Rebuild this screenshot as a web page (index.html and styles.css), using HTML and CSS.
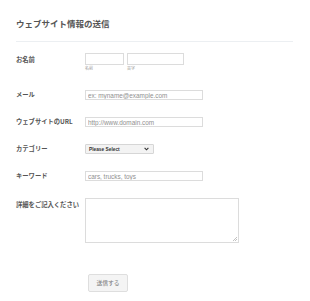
FILE: index.html
```html
<!DOCTYPE html>
<html lang="ja">
<head>
    <meta charset="UTF-8">
    <meta name="viewport" content="width=device-width, initial-scale=1.0">
    <title>ウェブサイト情報の送信</title>
    <link rel="stylesheet" href="styles.css">
</head>
<body>
    <div class="form-wrap">
        <div class="form-header">
            <h1>ウェブサイト情報の送信</h1>
        </div>

        <form class="form">
            <div class="row row-name">
                <label class="label">お名前</label>
                <div class="field name-field">
                    <div class="name-part">
                        <input type="text" class="input first">
                        <span class="sub">名前</span>
                    </div>
                    <div class="name-part">
                        <input type="text" class="input last">
                        <span class="sub">苗字</span>
                    </div>
                </div>
            </div>

            <div class="row">
                <label class="label">メール</label>
                <div class="field">
                    <input type="text" class="input wide" placeholder="ex: myname@example.com">
                </div>
            </div>

            <div class="row">
                <label class="label">ウェブサイトのURL</label>
                <div class="field">
                    <input type="text" class="input wide" placeholder="http://www.domain.com">
                </div>
            </div>

            <div class="row">
                <label class="label">カテゴリー</label>
                <div class="field">
                    <div class="select">
                        <span>Please Select</span>
                        <svg width="5" height="4" viewBox="0 0 5 4"><path d="M0.6 0.8 L2.5 2.8 L4.4 0.8" fill="none" stroke="#333" stroke-width="1.1"/></svg>
                    </div>
                </div>
            </div>

            <div class="row">
                <label class="label">キーワード</label>
                <div class="field">
                    <input type="text" class="input wide" placeholder="cars, trucks, toys">
                </div>
            </div>

            <div class="row row-text">
                <label class="label">詳細をご記入ください</label>
                <div class="field">
                    <div class="textarea">
                        <svg class="grip" width="4" height="4" viewBox="0 0 4 4"><path d="M4 0 L0 4 M4 2 L2 4" stroke="#999" stroke-width="0.6"/></svg>
                    </div>
                </div>
            </div>

            <div class="actions">
                <button type="button" class="btn">送信する</button>
            </div>
        </form>
    </div>
</body>
</html>
```

FILE: styles.css
```css
* {
    margin: 0;
    padding: 0;
    box-sizing: border-box;
}
body {
    background: #fff;
    font-family: "Noto Sans CJK JP", "Liberation Sans", sans-serif;
    color: #555;
}
.form-wrap {
    width: 277px;
    margin-left: 16px;
    padding-top: 18px;
}
.form-header {
    border-bottom: 1px solid #eceff2;
    height: 24px;
}
.form-header h1 {
    font-size: 8.5px;
    line-height: 10px;
    font-weight: 700;
    color: #555;
}
.form {
    padding-top: 11px;
}
.row {
    display: flex;
    margin-bottom: 17px;
}
.row-name {
    margin-bottom: 18px;
}
.label {
    width: 69px;
    flex-shrink: 0;
    font-size: 6.3px;
    font-weight: bold;
    line-height: 10px;
    color: #555;
}
.row-name .label {
    padding-top: 2px;
}
.row-text .label {
    padding-top: 2px;
    white-space: nowrap;
}
.field {
    display: flex;
}
.name-field {
    gap: 3px;
}
.name-part {
    display: flex;
    flex-direction: column;
}
.input {
    height: 10px;
    border: 1px solid #dcdcdc;
    background: #fff;
    font-family: "Liberation Sans", sans-serif;
    font-size: 6.4px;
    padding: 0 2px;
    outline: none;
}
.input::placeholder {
    color: #909090;
}
.first {
    width: 39px;
    height: 12px;
}
.last {
    width: 57px;
    height: 12px;
}
.sub {
    font-size: 4px;
    line-height: 7px;
    color: #999;
}
.wide {
    width: 118px;
}
.select {
    width: 69px;
    height: 10px;
    border: 1px solid #d6d6d6;
    border-radius: 1px;
    background: #f3f3f3;
    display: flex;
    align-items: center;
    justify-content: space-between;
    padding: 0 4px 0 3px;
    font-family: "Liberation Sans", sans-serif;
    font-size: 4.8px;
    font-weight: bold;
    color: #333;
}
.textarea {
    width: 154px;
    height: 45px;
    border: 1px solid #dcdcdc;
    position: relative;
}
.grip {
    position: absolute;
    right: 1px;
    bottom: 1px;
}
.actions {
    padding-left: 72px;
    padding-top: 6px;
}
.btn {
    width: 40px;
    height: 18px;
    border: 1px solid #dedede;
    border-radius: 2px;
    background: #f4f4f4;
    font-family: "Noto Sans CJK JP", sans-serif;
    font-size: 5.8px;
    color: #777;
}
```
